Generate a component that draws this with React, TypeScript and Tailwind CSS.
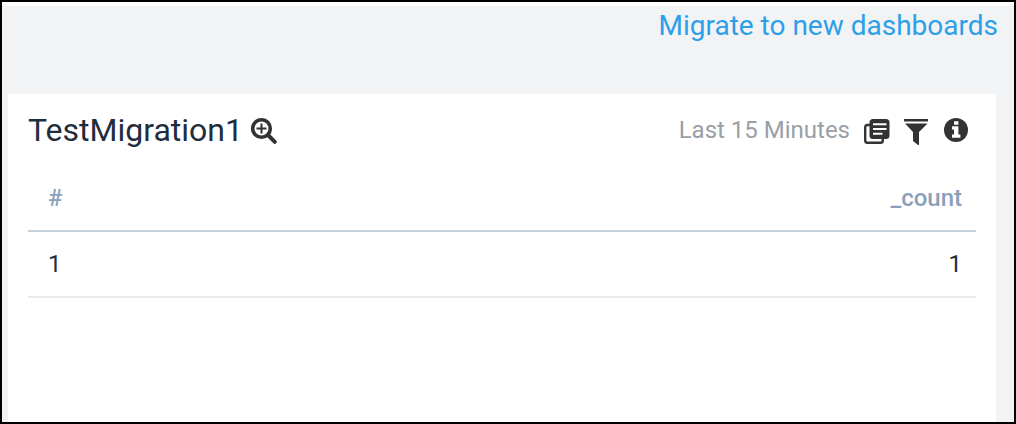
import React from "react";

type Row = { id: number; count: number };

const rows: Row[] = [{ id: 1, count: 1 }];

function ZoomIcon() {
  return (
    <svg viewBox="0 0 28 28" className="size-7" fill="none" stroke="currentColor" aria-hidden="true">
      <circle cx="12.5" cy="12.5" r="8.800" strokeWidth="3.600" />
      <path d="M12.500 7.500v10M7.500 12.500h10" strokeWidth="2" />
      <path d="M19 19l6.800 6.800" strokeWidth="4" strokeLinecap="round" />
    </svg>
  );
}

function CopyIcon() {
  return (
    <svg viewBox="0 0 28 28" className="size-7" fill="none" stroke="currentColor" aria-hidden="true">
      <path d="M8 9H5.500a2.500 2.500 0 0 0-2.300 2.500V24.500a2.300 2.300 0 0 0 2.300 2.300H18.500a2.300 2.300 0 0 0 2.300-2.300V22" strokeWidth="2.400" />
      <rect x="7.500" y="3" width="20" height="20" rx="3.500" fill="currentColor" stroke="none" />
      <path d="M11 8.300H24.500M11 13H24.500M11 17.700H20.500" stroke="white" strokeWidth="2" />
    </svg>
  );
}

function FilterIcon() {
  return (
    <svg viewBox="0 0 28 30" className="h-7.5 w-7" fill="currentColor" aria-hidden="true">
      <path d="M2 4H26V6.500H2z" />
      <path d="M3 8.500H25.500L17 17V30H16L11 26V17z" />
    </svg>
  );
}

function InfoIcon() {
  return (
    <svg viewBox="0 0 28 28" className="size-7" fill="currentColor" aria-hidden="true">
      <circle cx="14" cy="14" r="12" />
      <path d="M12 5.300h4.400v3.400h-4.400zM10 10.200h6.400v8.300h2v3.300h-8.400v-3.300h2v-5h-2z" fill="white" />
    </svg>
  );
}

function IconButton({ label, children }: { label: string; children: React.ReactNode }) {
  return (
    <button type="button" aria-label={label} className="shrink-0 text-[#333333]">
      {children}
    </button>
  );
}

export default function App() {
  return (
    <div className="flex min-h-screen flex-col border-2 border-black bg-[#f2f3f5] font-['Roboto',sans-serif] text-[#1f2d3d]">
      <header className="flex h-23 items-start justify-end border-t-4 border-white px-4">
        <a href="#migrate" className="text-[28px] leading-10 text-[#2d9fe8]">
          Migrate to new dashboards
        </a>
      </header>
      <main className="mr-4.5 ml-1.5 flex-1 bg-white px-5 pt-4">
        <div className="flex h-10 items-center justify-between">
          <div className="flex items-center gap-1.5">
            <h1 className="text-[32px] leading-10">TestMigration1</h1>
            <IconButton label="Zoom in">
              <ZoomIcon />
            </IconButton>
          </div>
          <div className="flex items-center gap-3 pr-1.5">
            <span className="text-2xl leading-9 text-[#999fa6]">Last 15 Minutes</span>
            <IconButton label="Copy">
              <CopyIcon />
            </IconButton>
            <IconButton label="Filter">
              <FilterIcon />
            </IconButton>
            <IconButton label="Information">
              <InfoIcon />
            </IconButton>
          </div>
        </div>
        <table className="mt-[15px] w-full text-2xl">
          <thead>
            <tr className="h-16.5 border-b-2 border-[#c5d0da] text-[#8a9fba]">
              <th scope="col" className="px-5 text-left font-medium">#</th>
              <th scope="col" className="px-3.5 text-right font-medium">_count</th>
            </tr>
          </thead>
          <tbody>
            {rows.map((row) => (
              <tr key={row.id} className="h-16.5 border-b-2 border-[#e8eaed]">
                <td className="px-5 text-left">{row.id}</td>
                <td className="px-3.5 text-right">{row.count}</td>
              </tr>
            ))}
          </tbody>
        </table>
      </main>
    </div>
  );
}
